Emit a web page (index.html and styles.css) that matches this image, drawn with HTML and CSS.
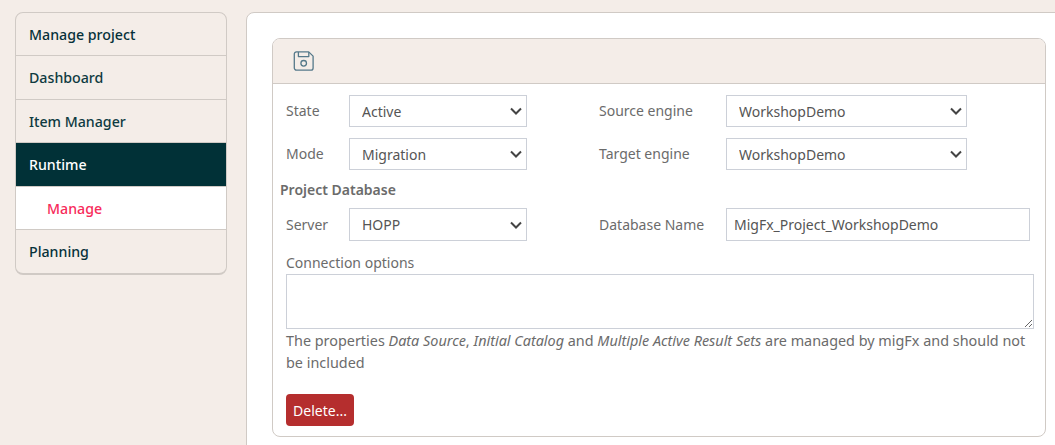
FILE: index.html
```html
<!DOCTYPE html>
<html lang="en">
<head>
<meta charset="utf-8">
<title>Manage project</title>
<link rel="stylesheet" href="styles.css">
</head>
<body>
<div class="page">
  <nav class="sidebar">
    <a class="nav-item strong">Manage project</a>
    <a class="nav-item">Dashboard</a>
    <a class="nav-item">Item Manager</a>
    <a class="nav-item active">Runtime</a>
    <a class="nav-item sub">Manage</a>
    <a class="nav-item strong last">Planning</a>
  </nav>
  <main class="panel">
    <section class="card">
      <header class="card-head">
        <svg class="save" width="22" height="22" viewBox="0 0 22 22" fill="none" stroke="#55798a" stroke-width="1.3" stroke-linejoin="round">
          <path d="M3.5 1.9h12.2l4.400 4.200v11.900a2.200 2.200 0 0 1-2.200 2.200H3.500a2.200 2.200 0 0 1-2.200-2.200V4.100a2.200 2.200 0 0 1 2.200-2.200z"/>
          <path d="M5.400 2v4.600h10.400V2"/>
          <circle cx="10.700" cy="13.300" r="2.800"/>
        </svg>
      </header>
      <div class="card-body">
        <div class="form-row">
          <div class="field">
            <label class="lbl">State</label>
            <select class="ctl sel-short"><option>Active</option></select>
          </div>
          <div class="field right">
            <label class="lbl lbl-r">Source engine</label>
            <select class="ctl sel-long"><option>WorkshopDemo</option></select>
          </div>
        </div>
        <div class="form-row">
          <div class="field">
            <label class="lbl">Mode</label>
            <select class="ctl sel-short"><option>Migration</option></select>
          </div>
          <div class="field right">
            <label class="lbl lbl-r">Target engine</label>
            <select class="ctl sel-long"><option>WorkshopDemo</option></select>
          </div>
        </div>
        <h2 class="section-title">Project Database</h2>
        <div class="form-row tall">
          <div class="field">
            <label class="lbl">Server</label>
            <select class="ctl sel-short"><option>HOPP</option></select>
          </div>
          <div class="field right">
            <label class="lbl lbl-r">Database Name</label>
            <input class="ctl inp" type="text" value="MigFx_Project_WorkshopDemo">
          </div>
        </div>
        <div class="conn">
          <label class="conn-lbl">Connection options</label>
          <textarea class="area"></textarea>
          <p class="help">The properties <em>Data Source</em>, <em>Initial Catalog</em> and <em>Multiple Active Result Sets</em> are managed by migFx and should not be included</p>
          <button class="danger" type="button">Delete...</button>
        </div>
      </div>
    </section>
  </main>
</div>
</body>
</html>
```
FILE: styles.css
```css
* { box-sizing: border-box; }
html, body { margin: 0; height: 100%; overflow: hidden; }
body {
  background: #f4ede8;
  font-family: "Noto Sans", "Open Sans", sans-serif;
  font-size: 14px;
  color: #6b6b6b;
}
.page { display: flex; align-items: flex-start; padding: 12px 0 0 15px; width: 1075px; height: 445px; overflow: hidden; }
.sidebar {
  width: 212px;
  flex: none;
  display: flex;
  flex-direction: column;
  border: 1px solid #d0cac5;
  border-bottom-width: 2px;
  border-radius: 8px;
  overflow: hidden;
  background: #f4ede8;
}
.nav-item {
  height: 43.4px;
  display: flex;
  align-items: center;
  padding: 0.6px 13px 0;
  color: #0e3a41;
  font-size: 14.2px;
  font-weight: 500;
  border-bottom: 1px solid #d0cac5;
}
.nav-item.strong { color: #06313a; }
.nav-item.last { border-bottom: 0; }
.nav-item.active { background: #013137; color: #fff; border-bottom: 1px solid #d0cac5; }
.nav-item.sub { background: #fff; color: #f72b5b; padding-left: 31px; }
.panel {
  margin-left: 19px;
  flex: 1;
  height: 460px;
  background: #fff;
  border: 1px solid #d0cac5;
  border-radius: 8px;
  padding: 25px 28px 0 25px;
}
.card {
  height: 399px;
  border: 1px solid #d0cac5;
  border-radius: 8px;
  overflow: hidden;
}
.card-head {
  height: 45px;
  background: #f4ede8;
  border-bottom: 1px solid #d0cac5;
  padding: 11px 0 0 20px;
}
.save { display: block; }
.card-body { padding: 11px 0 0 13px; }
.form-row { display: flex; height: 32px; margin-bottom: 11px; }
.form-row.tall { height: 33px; margin-bottom: 11px; }
.field { display: flex; align-items: center; }
.field.right { margin-left: 72px; }
.lbl { width: 63px; margin-top: -1px; }
.lbl-r { width: 127px; }
.ctl {
  height: 32px;
  border: 1px solid #ccd0d8;
  border-radius: 0;
  background-color: #fff;
  color: #555;
  font: inherit;
  padding: 0 12px;
  outline: 0;
}
.tall .ctl { height: 33px; }
select.ctl {
  appearance: none;
  -webkit-appearance: none;
  background-image: url("data:image/svg+xml,%3Csvg xmlns='http://www.w3.org/2000/svg' width='14' height='14' viewBox='0 0 14 14'%3E%3Cpath d='M2 4.500L7 9.500l5-5' fill='none' stroke='%23444' stroke-width='2'/%3E%3C/svg%3E");
  background-repeat: no-repeat;
  background-position: right 3px center;
}
.sel-short { width: 178px; }
.sel-long { width: 241px; }
.inp { width: 304px; padding: 0 7px; }
.section-title {
  margin: 0 0 9px -6px;
  height: 18px;
  line-height: 18px;
  font-size: 14px;
  font-weight: 600;
  color: #6b6b6b;
}
.conn-lbl { display: block; line-height: 22px; height: 22px; }
.area {
  display: block;
  width: 748px;
  height: 55px;
  margin-top: 0;
  border: 1px solid #ccd0d8;
  border-radius: 0;
  outline: 0;
  resize: both;
}
.help { margin: 1px 0 0; width: 748px; line-height: 22px; font-size: 14.4px; }
.danger {
  display: block;
  margin-top: 20px;
  width: 68px;
  height: 32px;
  padding: 0;
  border: 0;
  border-radius: 4px;
  background: #b52e2e;
  color: #fff;
  font: inherit;
}
```
